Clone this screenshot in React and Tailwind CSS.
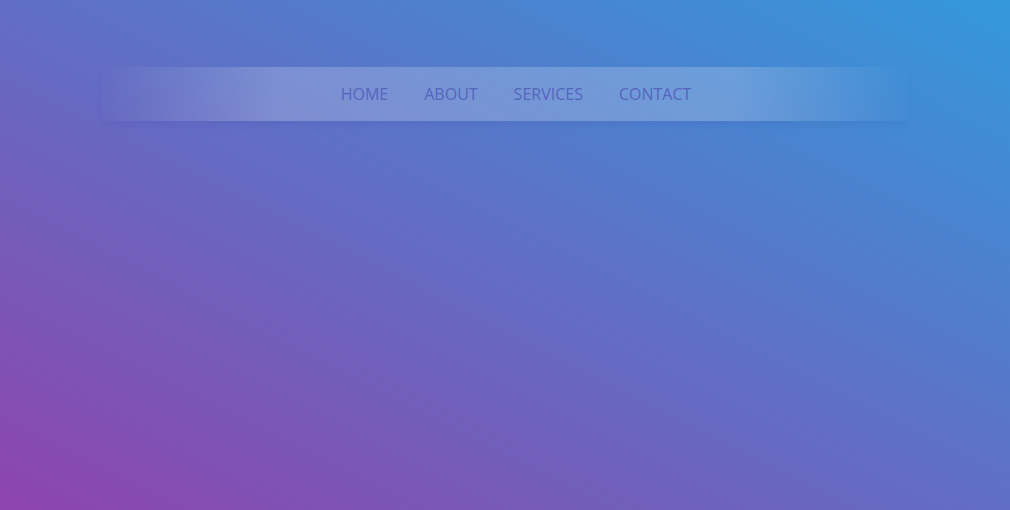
export default function App() {
  const links = ['HOME', 'ABOUT', 'SERVICES', 'CONTACT'];

  return (
    <div className="w-full h-[510px] overflow-hidden bg-[linear-gradient(to_top_right,#8e44ad,#3498db)] font-['Open_Sans',sans-serif]">
      <div className="pt-[67px]">
        <nav className="w-[80%] mx-auto h-[54px] flex items-center justify-center gap-9 pl-[22px] bg-[linear-gradient(to_right,rgba(255,255,255,0),rgba(255,255,255,0.2)_22%,rgba(255,255,255,0.2)_78%,rgba(255,255,255,0))] shadow-[0_5px_8px_-2px_rgba(40,40,140,0.08)]">
          {links.map((l) => (
            <a key={l} href="#" className="text-[16px] text-[#5565bd]">
              {l}
            </a>
          ))}
        </nav>
      </div>
    </div>
  );
}
